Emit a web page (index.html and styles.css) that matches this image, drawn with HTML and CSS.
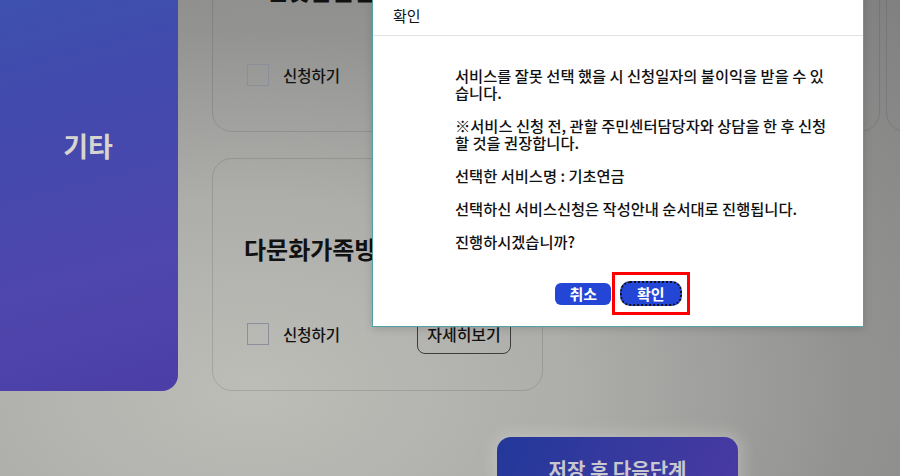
FILE: index.html
```html
<!DOCTYPE html>
<html>
	<head>
		<meta charset="UTF-8">
		<title>서비스 신청</title>
		<link rel="stylesheet" href="styles.css">
	</head>
	<body>
		<div class="page">
			<div class="top">
				<div class="side">기타</div>
				<ul class="cards">
					<li class="card">
						<h3>노인맞춤돌봄서비스</h3>
						<div class="row">
							<label class="check"><span class="box"></span>신청하기</label>
							<a class="more">자세히보기</a>
						</div>
					</li>
					<li class="card">
						<h3>장애인활동지원</h3>
						<div class="row">
							<label class="check"><span class="box"></span>신청하기</label>
							<a class="more">자세히보기</a>
						</div>
					</li>
					<li class="card">
						<h3>아이돌봄서비스</h3>
						<div class="row">
							<label class="check"><span class="box"></span>신청하기</label>
							<a class="more">자세히보기</a>
						</div>
					</li>
					<li class="card">
						<h3>다문화가족방문교육</h3>
						<div class="row">
							<label class="check"><span class="box"></span>신청하기</label>
							<a class="more">자세히보기</a>
						</div>
					</li>
				</ul>
			</div>
			<div class="foot">
				<a class="next-btn">저장 후 다음단계</a>
			</div>
		</div>

		<!-- 확인 팝업 -->
		<div class="dialog">
			<div class="dialog-head">확인</div>
			<div class="dialog-body">
				<p>서비스를 잘못 선택 했을 시 신청일자의 불이익을 받을 수 있습니다.</p>
				<p>※서비스 신청 전, 관할 주민센터담당자와 상담을 한 후 신청할 것을 권장합니다.</p>
				<p>선택한 서비스명 : 기초연금</p>
				<p>선택하신 서비스신청은 작성안내 순서대로 진행됩니다.</p>
				<p>진행하시겠습니까?</p>
			</div>
			<div class="dialog-btns">
				<a class="btn">취소</a>
				<span class="mark"><a class="btn btn-ok">확인</a></span>
			</div>
		</div>
	</body>
</html>
```

FILE: styles.css
```css
*{
	padding: 0;
	margin: 0;
	box-sizing: border-box;
}
a{
	text-decoration: none;
}
li{
	list-style: none;
}
html,body{
	width: 900px;
	height: 476px;
	overflow: hidden;
}
body{
	font-family: "Noto Sans CJK KR", "Noto Sans", sans-serif;
	color: #111;
	background: radial-gradient(ellipse at 28% 82%, #bdbdb8 0%, #adadaa 35%, #939392 65%, #808080 100%);
}
.page{
	margin-top: -101px;
}
.top{
	display: flex;
	gap: 34px;
}
.side{
	width: 194px;
	height: 492px;
	margin-left: -16px;
	flex-shrink: 0;
	border-radius: 16px;
	background: linear-gradient(165deg, #3b56ae 0%, #4349ad 45%, #4f47ad 75%, #4b3ea6 100%);
	color: #d8d4ce;
	font-size: 27px;
	font-weight: 700;
	display: flex;
	align-items: center;
	justify-content: center;
	padding-left: 14px;
}
.cards{
	display: grid;
	grid-template-columns: repeat(3, 331px);
	gap: 26px 6px;
}
.card{
	height: 233px;
	border: 1px solid rgba(60,60,60,0.18);
	border-radius: 20px;
	padding: 0 31px;
}
.card h3{
	margin-top: 75px;
	font-size: 24px;
	line-height: 30px;
	font-weight: 700;
	white-space: nowrap;
}
.row{
	margin-top: 50px;
	display: flex;
	align-items: center;
	justify-content: space-between;
}
.check{
	display: flex;
	align-items: center;
	font-size: 15.5px;
	font-weight: 500;
	padding-left: 3px;
}
.check .box{
	width: 22px;
	height: 22px;
	border: 1.5px solid #8b8f9c;
	margin-right: 14px;
}
.more{
	display: block;
	width: 94px;
	height: 40px;
	line-height: 38px;
	border: 1.5px solid #3d3d3d;
	border-radius: 8px;
	text-align: center;
	font-size: 16px;
	font-weight: 500;
	color: #111;
}
.foot{
	padding: 46px 0 0 497px;
}
.next-btn{
	display: block;
	width: 241px;
	height: 60px;
	border-radius: 14px;
	background: linear-gradient(120deg, #22389a 0%, #37399e 50%, #4a3aa2 100%);
	box-shadow: 0 0 14px 5px rgba(215,215,210,0.35);
	color: #c8c6cf;
	font-size: 20px;
	font-weight: 700;
	text-align: center;
	padding-top: 18px;
}

/* 팝업 */
.dialog{
	position: absolute;
	left: 372px;
	top: -12px;
	width: 492px;
	background: #fff;
	border: 1px solid #4fa3a6;
	box-shadow: 0 2px 8px rgba(0,0,0,0.15);
}
.dialog-head{
	padding: 17px 20px 9px;
	font-size: 15px;
	line-height: 20px;
	border-bottom: 1px solid #e2e2e2;
}
.dialog-body{
	padding: 31px 0 0 82px;
	width: 462px;
}
.dialog-body p{
	font-size: 15.3px;
	font-weight: 500;
	line-height: 17px;
	margin-bottom: 16px;
}
.dialog-body p:last-child{
	margin-bottom: 0;
}
.dialog-btns{
	display: flex;
	justify-content: center;
	align-items: center;
	gap: 1px;
	padding: 22px 0 11px 9px;
}
.btn{
	display: block;
	height: 22px;
	line-height: 22px;
	padding: 0 14px;
	border-radius: 6px;
	background: #2446d6;
	color: #fff;
	font-size: 15px;
	font-weight: 700;
}
.mark{
	display: block;
	border: 3px solid #f00;
	padding: 6px 5px;
}
.btn-ok{
	height: 25px;
	line-height: 21px;
	padding: 0 15px;
	border-radius: 10px;
	border: 2px dotted #111;
}
```
